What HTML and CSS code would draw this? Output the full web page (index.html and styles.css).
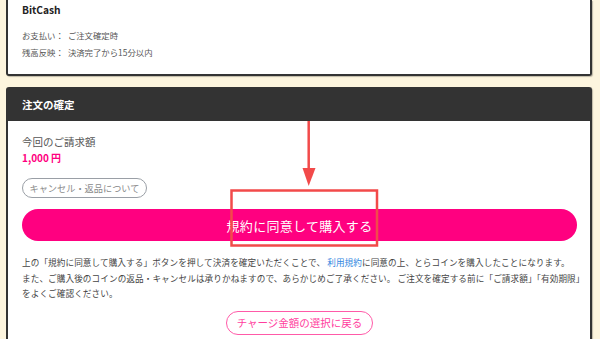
FILE: index.html
```html
<!DOCTYPE html>
<html lang="ja">
<head>
<meta charset="utf-8">
<link rel="stylesheet" href="styles.css">
</head>
<body>
<div class="page">
  <section class="card card-top">
    <h2 class="brand">BitCash</h2>
    <dl class="info">
      <div class="info-row"><dt>お支払い：</dt><dd>ご注文確定時</dd></div>
      <div class="info-row"><dt>残高反映：</dt><dd>決済完了から15分以内</dd></div>
    </dl>
  </section>

  <section class="card card-confirm">
    <header class="card-head">注文の確定</header>
    <div class="card-body">
      <p class="amount-label">今回のご請求額</p>
      <p class="amount">1,000 円</p>
      <div class="cancel-row"><button class="pill pill-gray">キャンセル・返品について</button></div>
      <button class="buy">規約に同意して購入する</button>
      <p class="notice">上の「規約に同意して購入する」ボタンを押して決済を確定いただくことで、 <a class="link">利用規約</a>に同意の上、とらコインを購入したことになります。<br>また、ご購入後のコインの返品・キャンセルは承りかねますので、あらかじめご了承ください。 ご注文を確定する前に「ご請求額」「有効期限」<br>をよくご確認ください。</p>
      <div class="back-row"><button class="pill pill-pink">チャージ金額の選択に戻る</button></div>
    </div>
  </section>
</div>

<svg class="annotation" width="600" height="339" viewBox="0 0 600 339">
  <line x1="308.7" y1="121" x2="308.7" y2="172" stroke="#f24a4a" stroke-width="2.5"/>
  <polygon points="302.5,168 315.5,168 308.7,186" fill="#f24a4a"/>
  <rect x="231.5" y="190.5" width="145.5" height="55" fill="none" stroke="#f24a4a" stroke-width="2.5"/>
</svg>
</body>
</html>
```

FILE: styles.css
```css
* { box-sizing: border-box; }
html, body { margin: 0; padding: 0; }
body {
  width: 600px;
  height: 339px;
  overflow: hidden;
  background: #fdf5de;
  font-family: "Noto Sans CJK JP", "Noto Sans", sans-serif;
  color: #444;
  position: relative;
}
.page {
  padding-left: 6px;
  width: 592px;
}
.card {
  background: #fff;
  border: 2px solid #333;
  box-shadow: 1px 1px 1px rgba(0,0,0,0.25);
}
.card-top {
  border-top: none;
  border-radius: 0 0 3px 3px;
  padding: 0 14px 12px 14px;
  height: 76px;
}
.brand {
  margin: 0;
  font-size: 10.2px;
  font-weight: 700;
  line-height: 20px;
  color: #222;
}
.info { margin: 7px 0 0 0; }
.info-row {
  display: flex;
  font-size: 8.4px;
  line-height: 17px;
  color: #555;
}
.info-row dt { margin: 0 4px 0 0; }
.info-row dd { margin: 0; }

.card-confirm {
  margin-top: 11px;
  border-radius: 3px 3px 0 0;
  border-bottom: none;
  height: 260px;
}
.card-head {
  background: #333;
  color: #fff;
  font-weight: 700;
  font-size: 10.5px;
  height: 32px;
  line-height: 32px;
  padding-left: 14px;
}
.card-body {
  padding: 13px 13px 0 14px;
}
.amount-label {
  margin: 0;
  font-size: 10.5px;
  line-height: 16px;
  color: #555;
}
.amount {
  margin: 0;
  font-size: 10px;
  line-height: 16px;
  font-weight: 700;
  color: #ff0080;
}
.cancel-row { margin-top: 12px; display: flex; }
.pill {
  font-family: inherit;
  background: #fff;
  border-radius: 999px;
  display: flex;
  align-items: center;
  justify-content: center;
  padding: 0;
}
.pill-gray {
  width: 125px;
  height: 20px;
  border: 1.5px solid #9a9fa6;
  color: #8a8a8a;
  font-size: 9.2px;
}
.buy {
  display: block;
  margin-top: 11px;
  width: 555px;
  height: 32px;
  border: none;
  border-radius: 16px;
  background: #ff0080;
  color: #fff;
  font-family: inherit;
  font-size: 13px;
  font-weight: 400;
  letter-spacing: 0.3px;
}
.notice {
  margin: 14px 0 0 0;
  font-size: 8.6px;
  letter-spacing: 0.1px;
  line-height: 15.5px;
  color: #444;
  white-space: nowrap;
}
.link { color: #2f86e0; }
.back-row {
  margin-top: 9px;
  display: flex;
  justify-content: center;
}
.pill-pink {
  width: 147px;
  height: 24px;
  border: 1.5px solid #ff5aa8;
  color: #ff3d9e;
  font-size: 10.5px;
}
.annotation {
  position: absolute;
  left: 0;
  top: 0;
  pointer-events: none;
}
```
